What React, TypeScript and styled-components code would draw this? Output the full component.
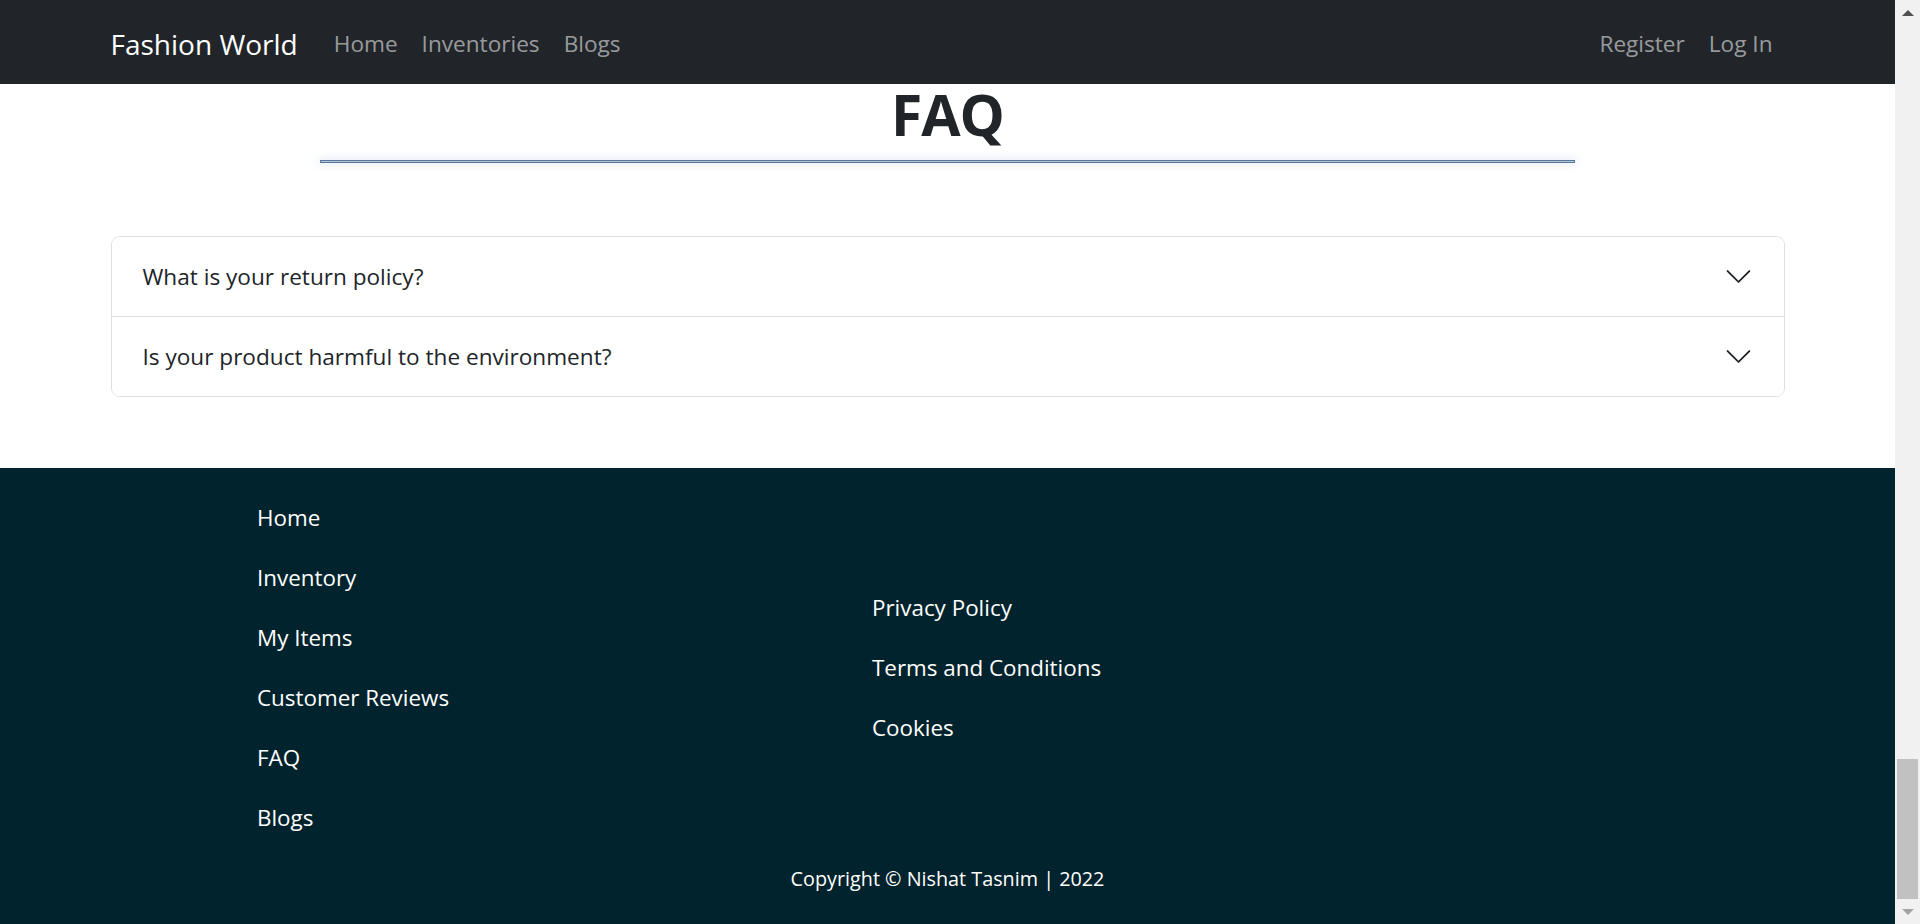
import React from "react";
import styled, { createGlobalStyle } from "styled-components";

const GlobalStyle = createGlobalStyle`
  * { box-sizing: border-box; }
  html, body { overflow: hidden; }
  body {
    margin: 0;
    font-family: "Open Sans", "Noto Sans", sans-serif;
    color: #212529;
    background: #fff;
  }
`;

const Window = styled.div`
  display: flex;
  height: 100vh;
`;

const Page = styled.div`
  flex: 1;
  min-width: 0;
`;

const ScrollTrack = styled.div`
  width: 25px;
  flex-shrink: 0;
  background: #f1f1f1;
  display: flex;
  flex-direction: column;
  align-items: center;
`;

const ScrollArrow = styled.div<{ $down?: boolean; $dim?: boolean }>`
  height: 25px;
  width: 100%;
  display: flex;
  align-items: center;
  justify-content: center;
  &::before {
    content: "";
    width: 0;
    height: 0;
    border-left: 6px solid transparent;
    border-right: 6px solid transparent;
    ${(p) =>
      p.$down
        ? `border-top: 6px solid ${p.$dim ? "#a3a3a3" : "#505050"};`
        : `border-bottom: 6px solid ${p.$dim ? "#a3a3a3" : "#505050"};`}
  }
`;

const ScrollSpace = styled.div`
  flex: 1;
`;

const ScrollThumb = styled.div`
  width: 21px;
  height: 140px;
  background: #c1c1c1;
`;

const Container = styled.div`
  width: 100%;
  max-width: 1710px;
  margin: 0 auto;
  padding: 0 18px;
`;

const NavBar = styled.nav`
  background: #212529;
  height: 84px;
`;

const NavInner = styled(Container)`
  display: flex;
  align-items: center;
  height: 100%;
  padding-top: 3px;
`;

const Brand = styled.a`
  color: #fff;
  font-size: 28px;
  margin-right: 24px;
  text-decoration: none;
  line-height: 1.5;
`;

const NavGroup = styled.div<{ $end?: boolean }>`
  display: flex;
  margin-left: ${(p) => (p.$end ? "auto" : "0")};
`;

const NavLink = styled.a`
  color: rgba(255, 255, 255, 0.55);
  font-size: 22.6px;
  line-height: 36px;
  padding: 0 12px;
  text-decoration: none;
`;

const Section = styled.section`
  padding-bottom: 71px;
`;

const Title = styled.h1`
  margin: 0;
  text-align: center;
  font-size: 57px;
  line-height: 60px;
  font-weight: 700;
  letter-spacing: -1px;
  color: #212529;
`;

const Divider = styled.hr`
  width: 75%;
  height: 3px;
  margin: 16px auto 0;
  padding: 0;
  border: 1px solid #56769a;
  background: #b4c6d8;
  box-shadow: 0 0 8px 2px rgba(130, 165, 205, 0.2);
`;

const Accordion = styled.div`
  margin-top: 73px;
  border: 1px solid #dfdfdf;
  border-radius: 9px;
  overflow: hidden;
`;

const Item = styled.div`
  & + & {
    border-top: 1px solid #dfdfdf;
  }
`;

const Question = styled.button`
  display: flex;
  align-items: center;
  justify-content: space-between;
  width: 100%;
  height: 79px;
  padding: 0 31px;
  background: #fff;
  border: 0;
  font-family: inherit;
  font-size: 22.6px;
  color: #212529;
  text-align: left;
  cursor: pointer;
`;

const Chevron = styled.svg`
  width: 29px;
  height: 29px;
  flex-shrink: 0;
`;

const Footer = styled.footer`
  background: #01232d;
  color: #fff;
  padding: 32px 0 27px;
`;

const FooterGrid = styled(Container)`
  display: grid;
  grid-template-columns: 615px 1fr;
  align-items: center;
  padding-left: 164.5px;
`;

const LinkList = styled.ul`
  list-style: none;
  margin: 0;
  padding: 0;
  display: flex;
  flex-direction: column;
  gap: 24px;
`;

const FooterLink = styled.a`
  display: block;
  color: #fff;
  font-size: 22.4px;
  line-height: 36px;
  text-decoration: none;
`;

const Copyright = styled.p`
  margin: 25px 0 0;
  text-align: center;
  font-size: 19.8px;
  line-height: 36px;
`;

const ChevronDown = () => (
  <Chevron viewBox="0 0 16 16" fill="#212529">
    <path
      fillRule="evenodd"
      d="M1.646 4.646a.5.5 0 0 1 .708 0L8 10.293l5.646-5.647a.5.5 0 0 1 .708.708l-6 6a.5.5 0 0 1-.708 0l-6-6a.5.5 0 0 1 0-.708z"
    />
  </Chevron>
);

const questions = [
  "What is your return policy?",
  "Is your product harmful to the environment?",
];

const mainLinks = ["Home", "Inventory", "My Items", "Customer Reviews", "FAQ", "Blogs"];
const legalLinks = ["Privacy Policy", "Terms and Conditions", "Cookies"];

export default function App() {
  return (
    <>
      <GlobalStyle />
      <Window>
        <Page>
          <NavBar>
            <NavInner>
              <Brand href="#">Fashion World</Brand>
              <NavGroup>
                <NavLink href="#">Home</NavLink>
                <NavLink href="#">Inventories</NavLink>
                <NavLink href="#">Blogs</NavLink>
              </NavGroup>
              <NavGroup $end>
                <NavLink href="#">Register</NavLink>
                <NavLink href="#">Log In</NavLink>
              </NavGroup>
            </NavInner>
          </NavBar>
          <Section>
            <Container>
              <Title>FAQ</Title>
              <Divider />
              <Accordion>
                {questions.map((q) => (
                  <Item key={q}>
                    <Question type="button">
                      <span>{q}</span>
                      <ChevronDown />
                    </Question>
                  </Item>
                ))}
              </Accordion>
            </Container>
          </Section>
          <Footer>
            <FooterGrid>
              <LinkList>
                {mainLinks.map((l) => (
                  <li key={l}>
                    <FooterLink href="#">{l}</FooterLink>
                  </li>
                ))}
              </LinkList>
              <LinkList>
                {legalLinks.map((l) => (
                  <li key={l}>
                    <FooterLink href="#">{l}</FooterLink>
                  </li>
                ))}
              </LinkList>
            </FooterGrid>
            <Copyright>Copyright © Nishat Tasnim | 2022</Copyright>
          </Footer>
        </Page>
        <ScrollTrack aria-hidden="true">
          <ScrollArrow />
          <ScrollSpace />
          <ScrollThumb />
          <ScrollArrow $down $dim />
        </ScrollTrack>
      </Window>
    </>
  );
}
